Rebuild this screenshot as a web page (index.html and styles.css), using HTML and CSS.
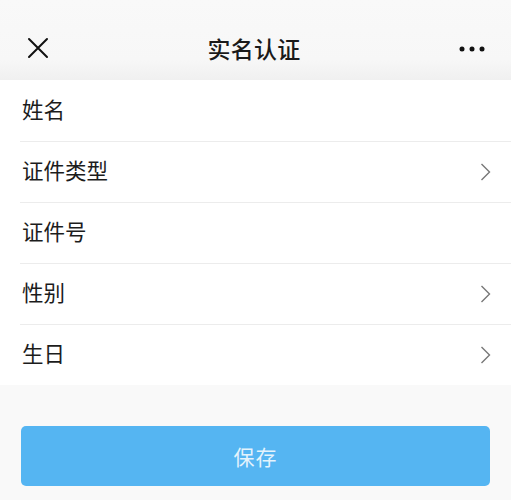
FILE: index.html
```html
<!DOCTYPE html>
<html lang="zh-CN">
<head>
<meta charset="utf-8">
<title>实名认证</title>
<link rel="stylesheet" href="styles.css">
</head>
<body>
<header class="topbar">
  <span class="icon-close">
    <svg width="22" height="22" viewBox="0 0 22 22"><path d="M2 2 L20 20 M20 2 L2 20" stroke="#111" stroke-width="2" fill="none" stroke-linecap="round"/></svg>
  </span>
  <h1 class="title">实名认证</h1>
  <span class="icon-more">
    <svg width="26" height="6" viewBox="0 0 26 6"><circle cx="3" cy="3" r="2.5" fill="#111"/><circle cx="13" cy="3" r="2.5" fill="#111"/><circle cx="23" cy="3" r="2.5" fill="#111"/></svg>
  </span>
</header>
<main class="form">
  <div class="row"><span class="label">姓名</span></div>
  <div class="row"><span class="label">证件类型</span><svg class="chev" width="11" height="18" viewBox="0 0 11 18"><path d="M1.5 1 L9.5 9 L1.5 17" stroke="#777" stroke-width="1.4" fill="none"/></svg></div>
  <div class="row"><span class="label">证件号</span></div>
  <div class="row"><span class="label">性别</span><svg class="chev" width="11" height="18" viewBox="0 0 11 18"><path d="M1.5 1 L9.5 9 L1.5 17" stroke="#777" stroke-width="1.4" fill="none"/></svg></div>
  <div class="row"><span class="label">生日</span><svg class="chev" width="11" height="18" viewBox="0 0 11 18"><path d="M1.5 1 L9.5 9 L1.5 17" stroke="#777" stroke-width="1.4" fill="none"/></svg></div>
</main>
<div class="actions">
  <button class="save">保存</button>
</div>
</body>
</html>
```
FILE: styles.css
```css
* { box-sizing: border-box; }
html, body {
  margin: 0;
  padding: 0;
  background: #f9f9f9;
  font-family: "Noto Sans CJK SC", "Noto Sans", sans-serif;
  color: #1c1c1c;
}
.topbar {
  height: 80px;
  background: linear-gradient(#f9f9f9 0%, #f7f7f7 75%, #f0f0f0 100%);
  display: flex;
  align-items: center;
  justify-content: space-between;
  padding: 16px 26px 0 27px;
}
.icon-close { display: flex; width: 22px; height: 22px; }
.icon-more { display: flex; width: 26px; height: 6px; margin-top: 2px; }
.title {
  margin: 0;
  font-size: 23px;
  font-weight: 500;
  color: #1a1a1a;
  letter-spacing: 0.3px;
}
.form {
  background: #fff;
}
.row {
  height: 61px;
  display: flex;
  align-items: center;
  justify-content: space-between;
  padding: 0 20px 0 22px;
  position: relative;
}
.row + .row::before {
  content: "";
  position: absolute;
  left: 20px;
  right: 0;
  top: 0;
  height: 1px;
  background: #ececec;
}
.label {
  font-size: 21.5px;
  line-height: 1;
  color: #1c1c1c;
  margin-bottom: 3px;
}
.chev { display: block; }
.actions {
  padding: 41px 21px 0 21px;
}
.save {
  width: 100%;
  height: 60px;
  border: none;
  border-radius: 5px;
  background: #55b5f2;
  color: rgba(255,255,255,0.85);
  font-family: "Noto Sans CJK SC", "Noto Sans", sans-serif;
  font-size: 21px;
  letter-spacing: 1px;
}
```
